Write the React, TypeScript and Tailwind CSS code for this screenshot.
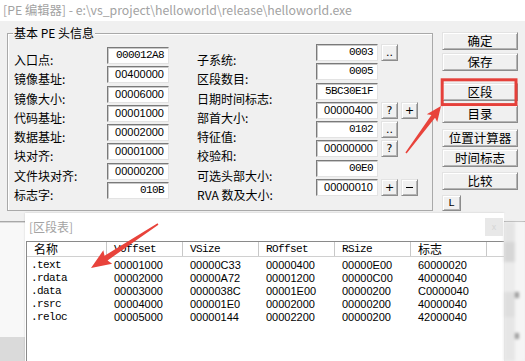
const CJK = "font-['Noto_Sans_CJK_SC','Noto_Sans',sans-serif]";
const MONO = "font-['Liberation_Mono',monospace] text-[11px] tracking-[-0.6px]";
const SANS = "font-['Liberation_Sans',Arial,sans-serif] text-[11px]";

type Field = { label: string; value: string; mono?: boolean; btns?: string[] };

const left: Field[] = [
  { label: "入口点:", value: "000012A8", mono: true },
  { label: "镜像基址:", value: "00400000" },
  { label: "镜像大小:", value: "00006000" },
  { label: "代码基址:", value: "00001000" },
  { label: "数据基址:", value: "00002000" },
  { label: "块对齐:", value: "00001000" },
  { label: "文件块对齐:", value: "00000200" },
  { label: "标志字:", value: "010B", mono: true },
];

const right: Field[] = [
  { label: "子系统:", value: "0003", mono: true, btns: [".."] },
  { label: "区段数目:", value: "0005", mono: true },
  { label: "日期时间标志:", value: "5BC30E1F", mono: true },
  { label: "部首大小:", value: "00000400", btns: ["?", "+"] },
  { label: "特征值:", value: "0102", mono: true, btns: [".."] },
  { label: "校验和:", value: "00000000", btns: ["?"] },
  { label: "可选头部大小:", value: "00E0", mono: true },
  { label: "RVA 数及大小:", value: "00000010", btns: ["+", "-"] },
];

const sideButtons = [
  { text: "确定", mt: "mt-[11px]", h: "h-[18px]" },
  { text: "保存", mt: "mt-[3px]", h: "h-[18px]" },
  { text: "区段", mt: "mt-[12px]", h: "h-[18px]" },
  { text: "目录", mt: "mt-[4px]", h: "h-[18px]" },
  { text: "位置计算器", mt: "mt-[6px]", h: "h-[18px]" },
  { text: "时间标志", mt: "mt-[2px]", h: "h-[18px]" },
  { text: "比较", mt: "mt-[5px]", h: "h-[18px]" },
];

const sections = [
  [".text", "00001000", "00000C33", "00000400", "00000E00", "60000020"],
  [".rdata", "00002000", "00000A72", "00001200", "00000C00", "40000040"],
  [".data", "00003000", "0000038C", "00001E00", "00000200", "C0000040"],
  [".rsrc", "00004000", "000001E0", "00002000", "00000200", "40000040"],
  [".reloc", "00005000", "00000144", "00002200", "00000200", "42000040"],
];

const raised =
  "bg-[#f0f0f0] border border-[#8c8c8c] border-t-[#e3e3e3] border-l-[#e3e3e3] shadow-[inset_1px_1px_0_#ffffff,inset_-1px_-1px_0_#b4b4b4]";

const Box = ({ value, mono }: { value: string; mono?: boolean }) => (
  <div
    className={`w-[62px] h-[17px] bg-white border border-t-[#7a7a7a] border-l-[#7a7a7a] border-b-[#e3e3e3] border-r-[#e3e3e3] shadow-[inset_1px_1px_0_#c8c8c8] flex items-center justify-end pr-[4px] text-black leading-none ${mono ? MONO : SANS}`}
  >
    {value}
  </div>
);

const SmallBtn = ({ t }: { t: string }) => (
  <div
    className={`w-[17px] h-[17px] ${raised} flex items-center justify-center text-[11px] leading-none text-black font-['DejaVu_Sans',sans-serif]`}
  >
    {t === "-" ? <span className="block w-[7px] h-[1px] bg-black" /> : t}
  </div>
);

// tapered annotation arrow from tail to tip
function arrowPoints(
  x1: number,
  y1: number,
  x2: number,
  y2: number,
  headLen: number,
  headW: number,
  w0: number,
  w1: number
) {
  const dx = x2 - x1;
  const dy = y2 - y1;
  const len = Math.hypot(dx, dy);
  const ux = dx / len;
  const uy = dy / len;
  const nx = -uy;
  const ny = ux;
  const bx = x2 - ux * headLen;
  const by = y2 - uy * headLen;
  const pts = [
    [x1 + (nx * w0) / 2, y1 + (ny * w0) / 2],
    [bx + (nx * w1) / 2, by + (ny * w1) / 2],
    [bx + (nx * headW) / 2 - ux * 2, by + (ny * headW) / 2 - uy * 2],
    [x2, y2],
    [bx - (nx * headW) / 2 - ux * 2, by - (ny * headW) / 2 - uy * 2],
    [bx - (nx * w1) / 2, by - (ny * w1) / 2],
    [x1 - (nx * w0) / 2, y1 - (ny * w0) / 2],
  ];
  return pts.map((p) => p.join(",")).join(" ");
}

const colW = ["w-[80px]", "w-[76px]", "w-[76px]", "w-[76px]", "w-[76px]", "w-[76px]"];

export default function App() {
  return (
    <div className={`relative w-[525px] h-[361px] overflow-hidden bg-[#f0f0f0] ${CJK}`}>
      {/* title */}
      <div className="h-[21px] bg-white pl-[3px] text-[12.3px] leading-[21px] text-[#a2a2a2] whitespace-nowrap">
        {"[PE 编辑器] - e:\\vs_project\\helloworld\\release\\helloworld.exe"}
      </div>

      {/* dialog body */}
      <div className="h-[192px] flex items-start">
        <div className="ml-[7px] mt-[12px] w-[426px] h-[178px] border border-[#a9a9a9] shadow-[inset_1px_1px_0_#ffffff] pl-[6px]">
          <span className="block w-fit -mt-[9px] -ml-[1px] px-[1px] bg-[#f0f0f0] text-[12px] leading-[16px] text-black">
            基本 PE 头信息
          </span>
          <div className="flex pt-[3px] text-[12px] text-black">
            <div className="flex flex-col w-[155px]">
              {left.map((f) => (
                <div key={f.label} className="h-[19.3px] flex items-start">
                  <span className="w-[93px] mt-[7px] leading-[17px]">{f.label}</span>
                  <div className="mt-[3px]">
                    <Box value={f.value} mono={f.mono} />
                  </div>
                </div>
              ))}
            </div>
            <div className="flex flex-col ml-[28px]">
              {right.map((f) => (
                <div key={f.label} className="h-[19.3px] flex items-start">
                  <span className="w-[119px] mt-[7px] leading-[17px] whitespace-nowrap">{f.label}</span>
                  <Box value={f.value} mono={f.mono} />
                  {(f.btns ?? []).map((b) => (
                    <div key={b} className="ml-[3px]">
                      <SmallBtn t={b} />
                    </div>
                  ))}
                </div>
              ))}
            </div>
          </div>
        </div>

        <div className="ml-[9px] flex flex-col w-[76px]">
          {sideButtons.map((b) => (
            <div
              key={b.text}
              className={`${b.mt} ${b.h} ${raised} flex items-center justify-center text-[12.5px] leading-none text-black`}
            >
              {b.text}
            </div>
          ))}
          <div
            className={`mt-[5px] w-[19px] h-[16px] ${raised} flex items-center justify-center font-['Liberation_Mono',monospace] text-[11px] leading-none text-black`}
          >
            L
          </div>
        </div>
      </div>

      {/* lower area: section table window */}
      <div className="h-[148px] flex">
        <div className="w-[25px] flex flex-col">
          <div className="h-[8px] bg-[#f0f0f0]" />
          <div className="h-[1px] bg-[#a8a8a8]" />
          <div className="h-[1px] bg-[#d8d8d8]" />
          <div className="flex-1 bg-[#f8f8f8]" />
          <div className="h-[24px] bg-[#dadada]" />
        </div>

        <div className="w-[479px] bg-white flex flex-col shadow-[0_0_2px_rgba(0,0,0,0.15)]">
          <div className="h-[28px] flex items-center justify-between">
            <span className="pl-[4px] text-[12px] text-[#a3a3a3]">[区段表]</span>
            <div className="mr-[1px] w-[18px] h-[18px] bg-[#e8e8e8] flex items-center justify-center text-[9px] text-[#d6d6d6]">
              x
            </div>
          </div>
          <div className="ml-[1px] flex-1 border-l border-t border-[#8a8a8a]">
            <div className="h-[15px] flex border-b border-[#d0d0d0]">
              {["名称", "VOffset", "VSize", "ROffset", "RSize", "标志"].map((h, i) => (
                <div
                  key={h}
                  className={`${colW[i]} h-full border-r border-[#c8c8c8] pl-[7px] flex items-center leading-none ${
                    /[A-Za-z]/.test(h) ? "font-['Liberation_Mono',monospace] text-[11px] tracking-[-0.6px]" : "text-[12px]"
                  } text-black`}
                >
                  {h}
                </div>
              ))}
            </div>
            <div className="pt-[2px]">
              {sections.map((r) => (
                <div key={r[0]} className="h-[13px] flex items-center">
                  {r.map((c, i) => (
                    <div
                      key={i}
                      className={`${colW[i]} ${i === 0 ? "pl-[4px] " + MONO : "pl-[7px] " + SANS} leading-none text-black`}
                    >
                      {c}
                    </div>
                  ))}
                </div>
              ))}
            </div>
          </div>
        </div>

        <div className="flex-1 flex flex-col">
          <div className="h-[8px] bg-[#f0f0f0]" />
          <div className="h-[1px] bg-[#a8a8a8]" />
          <div className="flex-1 flex blur-[1.5px]">
            <div className="w-[11px] flex flex-col">
              <div className="h-[20px] bg-[#e4e4e4]" />
              <div className="h-[20px] bg-[#d6d6d6]" />
              <div className="h-[30px] bg-[#ececec]" />
              <div className="h-[25px] bg-[#dedede]" />
              <div className="flex-1 bg-[#e6e6e6]" />
            </div>
            <div className="flex-1 flex flex-col bg-[#f5f5f5]">
              <div className="h-[70px]" />
              <div className="h-[6px] bg-[#9a9a9a] w-[4px]" />
              <div className="h-[35px]" />
              <div className="h-[6px] bg-[#9a9a9a] w-[4px]" />
            </div>
          </div>
        </div>
      </div>

      {/* annotations */}
      <svg className="absolute inset-0 pointer-events-none" width="525" height="361" viewBox="0 0 525 361">
        <rect x="442.2" y="79.8" width="73.8" height="24.8" fill="none" stroke="#e5403a" strokeWidth="3" />
        <polygon points={arrowPoints(406, 153, 441, 106, 13, 13, 1.5, 4.5)} fill="#e8433b" />
        <polygon points={arrowPoints(158, 224, 91, 268, 18, 16, 1.5, 5.5)} fill="#e8433b" />
      </svg>
    </div>
  );
}
